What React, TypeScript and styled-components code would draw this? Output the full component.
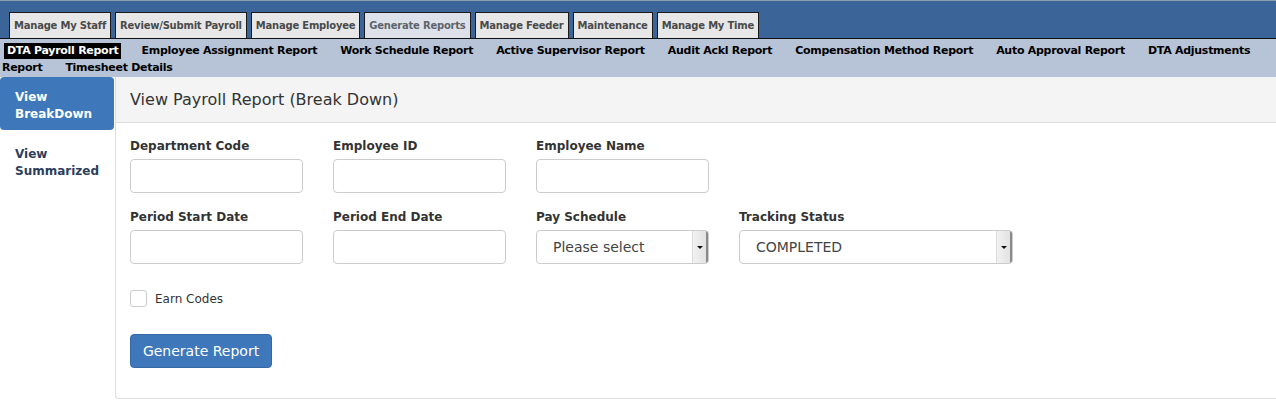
import React from "react";
import styled, { createGlobalStyle } from "styled-components";

const GlobalStyle = createGlobalStyle`
  body {
    margin: 0;
    background: #ffffff;
    font-family: "DejaVu Sans", Verdana, sans-serif;
  }
`;

const topTabs = [
  "Manage My Staff",
  "Review/Submit Payroll",
  "Manage Employee",
  "Generate Reports",
  "Manage Feeder",
  "Maintenance",
  "Manage My Time",
];

const reportLinks = [
  "DTA Payroll Report",
  "Employee Assignment Report",
  "Work Schedule Report",
  "Active Supervisor Report",
  "Audit Ackl Report",
  "Compensation Method Report",
  "Auto Approval Report",
  "DTA Adjustments Report",
  "Timesheet Details",
];

const App = () => {
  return (
    <>
      <GlobalStyle />
      <Page>
        <TopBar>
          {topTabs.map((t) => (
            <TopTab key={t} active={t === "Generate Reports"}>
              {t}
            </TopTab>
          ))}
        </TopBar>
        <SubNav>
          {reportLinks.map((l, i) => (
            <SubLink key={l} active={i === 0}>
              {l}
            </SubLink>
          ))}
        </SubNav>
        <Body>
          <SideNav>
            <SideItem active>
              View
              <br />
              BreakDown
            </SideItem>
            <SideItem>
              View
              <br />
              Summarized
            </SideItem>
          </SideNav>
          <Panel>
            <PanelHeader>View Payroll Report (Break Down)</PanelHeader>
            <PanelBody>
              <FieldGrid>
                <Field>
                  <Label>Department Code</Label>
                  <TextInput />
                </Field>
                <Field>
                  <Label>Employee ID</Label>
                  <TextInput />
                </Field>
                <Field>
                  <Label>Employee Name</Label>
                  <TextInput />
                </Field>
                <Field />
                <Field>
                  <Label>Period Start Date</Label>
                  <TextInput />
                </Field>
                <Field>
                  <Label>Period End Date</Label>
                  <TextInput />
                </Field>
                <Field>
                  <Label>Pay Schedule</Label>
                  <SelectBox width={173}>
                    <SelectValue>Please select</SelectValue>
                    <ArrowBox>
                      <Caret />
                    </ArrowBox>
                  </SelectBox>
                </Field>
                <Field>
                  <Label>Tracking Status</Label>
                  <SelectBox width={274}>
                    <SelectValue>COMPLETED</SelectValue>
                    <ArrowBox>
                      <Caret />
                    </ArrowBox>
                  </SelectBox>
                </Field>
              </FieldGrid>
              <CheckRow>
                <CheckBox />
                <CheckLabel>Earn Codes</CheckLabel>
              </CheckRow>
              <PrimaryButton>Generate Report</PrimaryButton>
            </PanelBody>
          </Panel>
        </Body>
      </Page>
    </>
  );
};

export default App;

const Page = styled.div`
  width: 1276px;
  height: 406px;
  overflow: hidden;
`;

const TopBar = styled.div`
  display: flex;
  align-items: flex-end;
  gap: 4px;
  height: 39px;
  box-sizing: border-box;
  padding: 0 0 0 9px;
  background: #3b6599;
  border-top: 1px solid #8e9bb0;
  border-bottom: 1px solid #111111;
`;

const TopTab = styled.div<{ active?: boolean }>`
  height: 26px;
  box-sizing: border-box;
  display: flex;
  align-items: center;
  padding: 0 4px 1px;
  background: ${(p) => (p.active ? "#dde2ea" : "#e7e7e7")};
  border: 1px solid #1a1a1a;
  border-bottom: none;
  font-size: 10px;
  font-weight: bold;
  letter-spacing: -0.22px;
  color: ${(p) => (p.active ? "#5f646b" : "#4a4a4a")};
  white-space: nowrap;
`;

const SubNav = styled.div`
  background: #b7c3d6;
  height: 38px;
  box-sizing: border-box;
  padding: 3px 0 0 2px;
  font-size: 11px;
  font-weight: bold;
  letter-spacing: -0.28px;
  line-height: 17px;
  color: #000000;
`;

const SubLink = styled.span<{ active?: boolean }>`
  margin-right: 18px;
  padding: 1px 2px 2px 3px;
  background: ${(p) => (p.active ? "#000000" : "transparent")};
  color: ${(p) => (p.active ? "#ffffff" : "#000000")};
  margin-left: ${(p) => (p.active ? "2px" : "0")};
`;

const Body = styled.div`
  display: flex;
  align-items: flex-start;
`;

const SideNav = styled.div`
  width: 114px;
  flex-shrink: 0;
  display: flex;
  flex-direction: column;
  gap: 4px;
`;

const SideItem = styled.div<{ active?: boolean }>`
  padding: 12px 15px 7px;
  border-radius: 4px;
  background: ${(p) => (p.active ? "#3e78ba" : "transparent")};
  color: ${(p) => (p.active ? "#ffffff" : "#2c3e5c")};
  font-size: 12px;
  font-weight: bold;
  line-height: 17px;
`;

const Panel = styled.div`
  flex: 1;
  height: 322px;
  box-sizing: border-box;
  margin-left: 1px;
  border: 1px solid #dddddd;
  border-top: none;
  border-right: none;
  border-radius: 0 0 0 4px;
`;

const PanelHeader = styled.div`
  height: 46px;
  box-sizing: border-box;
  display: flex;
  align-items: center;
  padding: 0 14px;
  background: #f4f4f4;
  border-bottom: 1px solid #dddddd;
  font-size: 16px;
  color: #333333;
`;

const PanelBody = styled.div`
  padding: 15px 14px 0;
`;

const FieldGrid = styled.div`
  display: grid;
  grid-template-columns: repeat(4, 203px);
  row-gap: 16px;
`;

const Field = styled.div`
  display: flex;
  flex-direction: column;
  gap: 5px;
`;

const Label = styled.div`
  font-size: 12px;
  font-weight: bold;
  color: #333333;
  line-height: 16px;
`;

const TextInput = styled.input`
  width: 173px;
  height: 34px;
  box-sizing: border-box;
  border: 1px solid #cccccc;
  border-radius: 4px;
  background: #ffffff;
  outline: none;
`;

const SelectBox = styled.div<{ width: number }>`
  width: ${(p) => p.width}px;
  height: 34px;
  box-sizing: border-box;
  display: flex;
  align-items: stretch;
  border: 1px solid #cccccc;
  border-radius: 4px;
  background: #ffffff;
  overflow: hidden;
`;

const SelectValue = styled.div`
  flex: 1;
  display: flex;
  align-items: center;
  padding-left: 16px;
  font-size: 14px;
  color: #444444;
`;

const ArrowBox = styled.div`
  width: 13px;
  display: flex;
  align-items: center;
  justify-content: center;
  background: linear-gradient(to right, #f2f2f2, #e2e2e2);
  border-left: 1px solid #dcdcdc;
  border-right: 2px solid #8a8a8a;
`;

const Caret = styled.div`
  width: 0;
  height: 0;
  border-left: 3px solid transparent;
  border-right: 3px solid transparent;
  border-top: 3px solid #111111;
`;

const CheckRow = styled.div`
  display: flex;
  align-items: center;
  gap: 8px;
  margin-top: 26px;
`;

const CheckBox = styled.div`
  width: 17px;
  height: 17px;
  box-sizing: border-box;
  border: 1px solid #cccccc;
  border-radius: 3px;
  background: #ffffff;
`;

const CheckLabel = styled.span`
  font-size: 12px;
  color: #333333;
`;

const PrimaryButton = styled.button`
  margin-top: 27px;
  width: 142px;
  height: 34px;
  border: 1px solid #3469a6;
  border-radius: 4px;
  background: #3e78ba;
  color: #ffffff;
  font-family: "DejaVu Sans", Verdana, sans-serif;
  font-size: 14px;
  padding: 0;
`;
